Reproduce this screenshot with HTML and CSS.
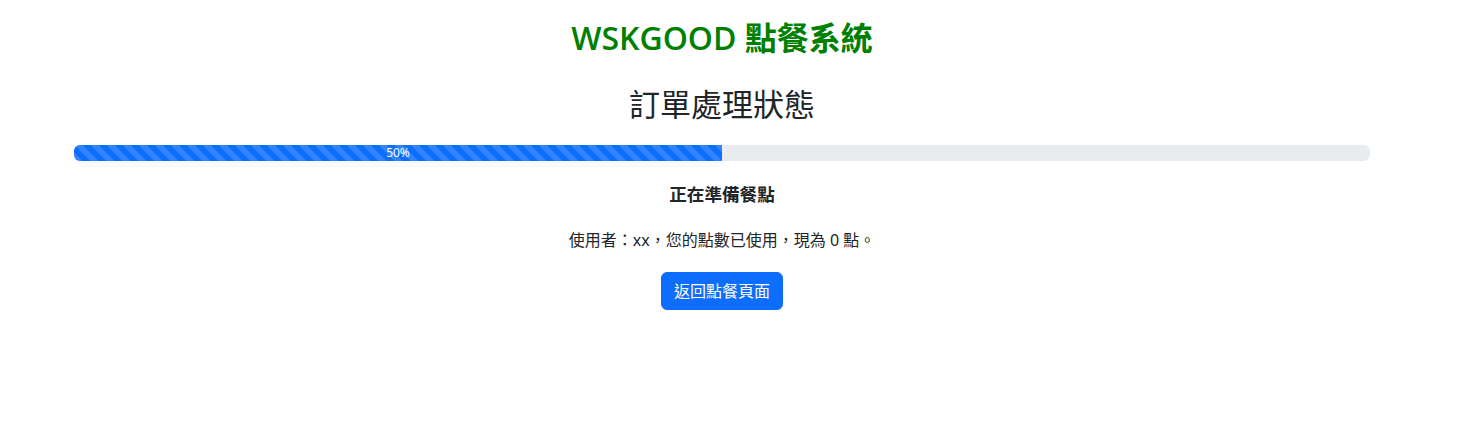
FILE: index.html
```html
<!DOCTYPE html>
<html lang="zh-Hant">
<head>
<meta charset="utf-8">
<title>WSKGOOD 點餐系統</title>
<link rel="stylesheet" href="styles.css">
</head>
<body>
<div class="page">
  <div class="container">
    <h1 class="brand">WSKGOOD 點餐系統</h1>
    <h2 class="heading">訂單處理狀態</h2>
    <div class="progress">
      <div class="progress-bar" style="width: 50%">50%</div>
    </div>
    <p class="status">正在準備餐點</p>
    <p class="info">使用者：xx，您的點數已使用，現為 0 點。</p>
    <div class="actions">
      <a class="btn" href="#">返回點餐頁面</a>
    </div>
  </div>
</div>
</body>
</html>
```

FILE: styles.css
```css
* { box-sizing: border-box; }
body {
  margin: 0;
  background: #fff;
  color: #212529;
  font-family: "Noto Sans", "Noto Sans CJK TC", sans-serif;
  font-size: 16px;
  line-height: 1.5;
}
.page {
  margin-right: 26px;
}
.container {
  max-width: 1320px;
  margin: 0 auto;
  padding: 19px 12px 0;
  text-align: center;
}
.brand {
  margin: 0;
  font-family: "Open Sans", "Noto Sans CJK TC", sans-serif;
  font-size: 32px;
  line-height: 1.2;
  font-weight: 600;
  color: #008000;
}
.heading {
  margin: 29px 0 0;
  font-size: 31px;
  line-height: 1.2;
  font-weight: 400;
  color: #212529;
}
.progress {
  margin-top: 21px;
  height: 16px;
  background: #e9ecef;
  border-radius: 6px;
  overflow: hidden;
  display: flex;
}
.progress-bar {
  display: flex;
  justify-content: center;
  align-items: center;
  background-color: #0d6efd;
  background-image: linear-gradient(45deg, rgba(255,255,255,.15) 25%, transparent 25%, transparent 50%, rgba(255,255,255,.15) 50%, rgba(255,255,255,.15) 75%, transparent 75%, transparent);
  background-size: 16px 16px;
  color: #fff;
  font-size: 12px;
  line-height: 1;
  white-space: nowrap;
}
.status {
  margin: 20px 0 0;
  font-size: 17.6px;
  font-weight: 700;
}
.info {
  margin: 21px 0 0;
  font-size: 16px;
}
.actions {
  margin-top: 20px;
}
.btn {
  display: inline-block;
  padding: 6px 12px;
  border: 1px solid #0d6efd;
  border-radius: 6px;
  background: #0d6efd;
  color: #fff;
  text-decoration: none;
  font-size: 16px;
  line-height: 24px;
}
```
